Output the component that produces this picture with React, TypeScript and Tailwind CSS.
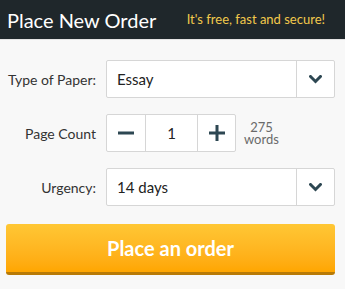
import { useState } from "react";

function Chevron() {
  return (
    <svg width="13" height="9" viewBox="0 0 13 9" fill="none">
      <path d="M1.5 1.5 L6.5 6.5 L11.5 1.5" stroke="#2d4752" strokeWidth="3" strokeLinecap="square" />
    </svg>
  );
}

function SelectBox({ value }: { value: string }) {
  return (
    <div className="flex h-[38px] w-[229px] border border-[#d6d6d6] bg-white rounded-[2px]">
      <div className="flex flex-1 items-center pl-[10px] text-[15px] text-[#222]">{value}</div>
      <div className="flex w-[38px] items-center justify-center border-l border-[#d6d6d6]">
        <Chevron />
      </div>
    </div>
  );
}

export default function App() {
  const [pages, setPages] = useState(1);

  return (
    <div className="w-[345px] h-[289px] bg-[#f8f8f8]" style={{ fontFamily: "Lato, 'Noto Sans', sans-serif" }}>
      <div className="flex h-[40px] items-center justify-between bg-[#1f272b] border-b border-[#e3e3e3] pl-[7px] pr-[20px]">
        <h1 className="text-[20px] text-white leading-none">Place New Order</h1>
        <span className="text-[13px] text-[#f2c94c]">It's free, fast and secure!</span>
      </div>

      <div className="flex flex-col gap-[16px] px-[6px] pt-[20px]">
        <div className="flex items-center gap-[10px]">
          <label className="w-[90px] text-right text-[14px] text-[#333]">Type of Paper:</label>
          <SelectBox value="Essay" />
        </div>

        <div className="flex items-center gap-[10px]">
          <label className="w-[90px] text-right text-[14px] text-[#333]">Page Count</label>
          <div className="flex h-[38px] border border-[#d6d6d6] bg-white rounded-[2px]">
            <button
              className="flex w-[39px] items-center justify-center border-r border-[#d6d6d6]"
              onClick={() => setPages(Math.max(1, pages - 1))}
            >
              <svg width="16" height="16" viewBox="0 0 16 16">
                <rect x="0" y="6.5" width="16" height="3" fill="#2d4752" />
              </svg>
            </button>
            <div className="flex w-[51px] items-center justify-center text-[15px] text-[#222]">{pages}</div>
            <button
              className="flex w-[38px] items-center justify-center border-l border-[#d6d6d6]"
              onClick={() => setPages(pages + 1)}
            >
              <svg width="16" height="16" viewBox="0 0 16 16">
                <rect x="0" y="6.5" width="16" height="3" fill="#2d4752" />
                <rect x="6.5" y="0" width="3" height="16" fill="#2d4752" />
              </svg>
            </button>
          </div>
          <div className="ml-[-2px] flex flex-col items-center text-[13px] leading-[12.5px] text-[#6a6a6a]">
            <span>{pages * 275}</span>
            <span>words</span>
          </div>
        </div>

        <div className="flex items-center gap-[10px]">
          <label className="w-[90px] text-right text-[14px] text-[#333]">Urgency:</label>
          <SelectBox value="14 days" />
        </div>

        <button className="mt-[2px] h-[51px] w-[329px] rounded-[3px] border-b-[3px] border-[#b87a06] bg-gradient-to-b from-[#ffc734] to-[#ffa600] text-[20px] font-bold text-white">
          Place an order
        </button>
      </div>
    </div>
  );
}
